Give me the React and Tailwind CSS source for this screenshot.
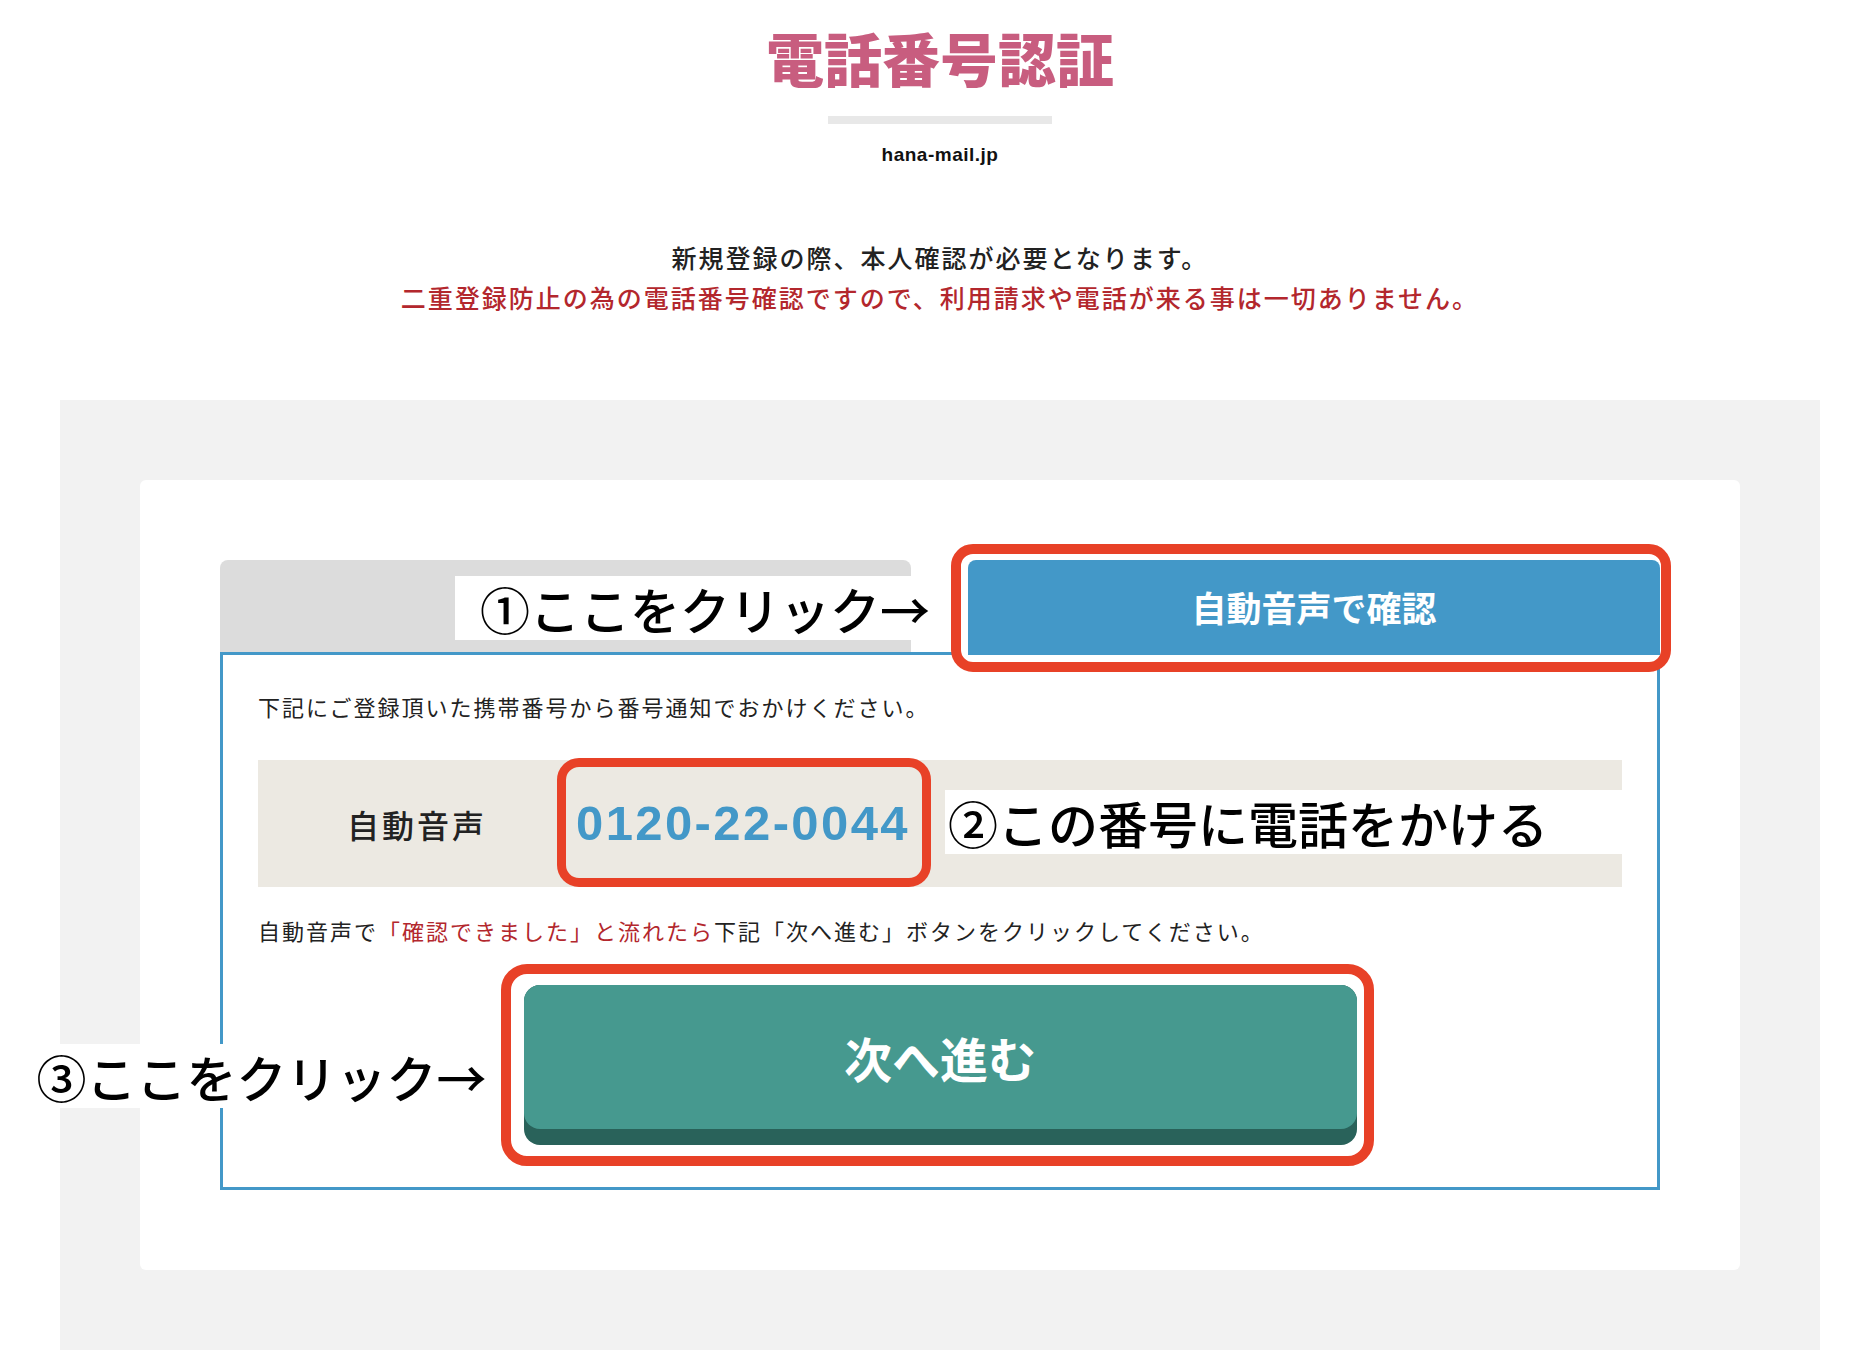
import React from "react";

// white-backed callout text laid over the page (screenshot annotations)
const Note = ({ className, children }) => (
  <div
    className={`absolute flex h-[64px] items-center whitespace-nowrap bg-white text-[50px] leading-none font-medium text-black ${className}`}
  >
    {children}
  </div>
);

const App = () => {
  return (
    <div className="min-h-screen bg-white pl-[60px] pr-[46px] pb-[21px] font-['Noto_Sans_CJK_JP',sans-serif] text-[#222]">
      {/* Header */}
      <header className="flex flex-col items-center">
        <h1 className="mt-[28px] text-[58px] leading-none font-black text-[#c85d7f]">
          電話番号認証
        </h1>
        <div className="mt-[30px] h-[8px] w-[224px] bg-[#e8e8e8]" />
        <p className="mt-[21px] font-['Liberation_Sans',sans-serif] text-[19px] leading-none font-bold tracking-[0.5px] text-[#111]">
          hana-mail.jp
        </p>
        <div className="mt-[73px] text-center text-[25px] leading-[40px] font-medium tracking-[2px]">
          <p>新規登録の際、本人確認が必要となります。</p>
          <p className="text-[#b3272d]">
            二重登録防止の為の電話番号確認ですので、利用請求や電話が来る事は一切ありません。
          </p>
        </div>
      </header>

      {/* Verification panel */}
      <section className="mt-[83px] bg-[#f2f2f2] p-[80px]">
        <div className="rounded-[6px] bg-white px-[80px] pt-[80px] pb-[80px]">
          {/* Tabs */}
          <div className="relative flex items-start gap-[57px]">
            <div className="h-[92px] w-[691px] rounded-t-[8px] bg-[#dcdcdc]" />
            <div className="relative z-10 -mb-[3px] h-[95px] w-[692px]">
              <span className="absolute -top-[16px] -bottom-[17px] -left-[17px] -right-[11px] rounded-[22px] border-[10px] border-[#e84127] bg-white" />
              <div className="relative flex h-full w-full items-center justify-center rounded-t-[8px] bg-[#4398c8] text-[35px] font-bold text-white">
                自動音声で確認
              </div>
            </div>
            <Note className="left-[235px] top-[16px] w-[471px] pl-[25px]">①ここをクリック→</Note>
          </div>

          {/* Tab body */}
          <div className="border-[3px] border-[#4398c8] px-[35px] pt-[36px] pb-[42px]">
            <p className="text-[22px] leading-[30px] tracking-[2px]">
              下記にご登録頂いた携帯番号から番号通知でおかけください。
            </p>

            <div className="relative mt-[39px] flex h-[127px] items-center bg-[#ece9e2]">
              <div className="flex w-[318px] justify-center text-[32px] font-medium tracking-[3px]">
                自動音声
              </div>
              <span className="font-['Liberation_Sans',sans-serif] text-[49px] leading-none font-bold tracking-[2.4px] text-[#4398c8]">
                0120-22-0044
              </span>
              <span className="absolute -top-[2px] left-[299px] h-[129px] w-[374px] rounded-[22px] border-[9px] border-[#e84127]" />
              <Note className="left-[687px] right-0 top-[30px] pl-[3px]">②この番号に電話をかける</Note>
            </div>

            <p className="mt-[28px] text-[22px] leading-[30px] tracking-[2px]">
              自動音声で<span className="text-[#b3272d]">「確認できました」と流れたら</span>下記「次へ進む」ボタンをクリックしてください。
            </p>

            <div className="relative mx-auto mt-[40px] w-[833px]">
              <span className="absolute -top-[21px] -bottom-[21px] -left-[23px] -right-[17px] rounded-[26px] border-[10px] border-[#e84127]" />
              <button className="relative block w-full rounded-[16px] bg-[#29625a] pb-[16px]">
                <div className="flex h-[144px] items-center justify-center rounded-[16px] bg-[#46998f] text-[48px] font-bold text-white">
                  次へ進む
                </div>
              </button>
              <Note className="-left-[491px] top-[59px] w-[457px] pl-[4px]">③ここをクリック→</Note>
            </div>
          </div>
        </div>
      </section>
    </div>
  );
};

export default App;
